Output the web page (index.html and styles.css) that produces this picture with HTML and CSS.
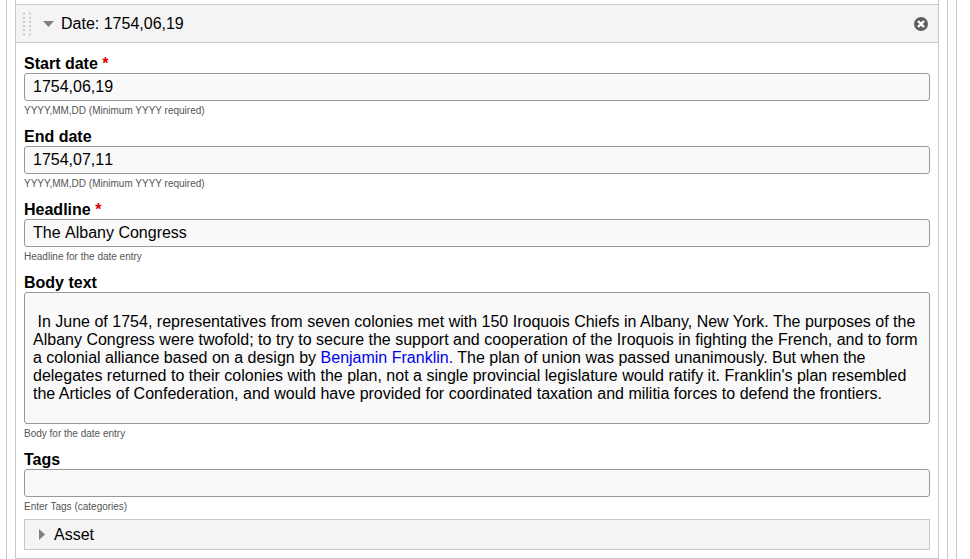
FILE: index.html
```
<!DOCTYPE html>
<html lang="en">
<head>
    <meta charset="UTF-8">
    <title>Timeline editor</title>
    <link rel="stylesheet" href="styles.css">
</head>
<body>
    <div class="form">
        <div class="list">
            <section class="item">
                <header class="item-header">
                    <svg class="grip" width="8" height="24" viewBox="0 0 8 24">
                        <path d="M1 0.5v23M7 0.5v23" stroke="#ccc" stroke-width="2" stroke-dasharray="2 2.2"/>
                    </svg>
                    <svg class="arrow-down" width="11" height="6" viewBox="0 0 11 6">
                        <path d="M0 0h11L5.5 6z" fill="#808080"/>
                    </svg>
                    <span class="item-title">Date: 1754,06,19</span>
                    <svg class="remove" width="14" height="14" viewBox="0 0 14 14">
                        <circle cx="7" cy="7" r="7" fill="#5f5f5f"/>
                        <path d="M4 4l6 6M10 4l-6 6" stroke="#fff" stroke-width="2.4"/>
                    </svg>
                </header>

                <div class="item-body">
                    <div class="field">
                        <label for="start">Start date <span class="required">*</span></label>
                        <input id="start" type="text" value="1754,06,19">
                        <p class="description">YYYY,MM,DD (Minimum YYYY required)</p>
                    </div>
                    <div class="field">
                        <label for="end">End date</label>
                        <input id="end" type="text" value="1754,07,11">
                        <p class="description">YYYY,MM,DD (Minimum YYYY required)</p>
                    </div>
                    <div class="field">
                        <label for="headline">Headline <span class="required">*</span></label>
                        <input id="headline" type="text" value="The Albany Congress">
                        <p class="description">Headline for the date entry</p>
                    </div>
                    <div class="field">
                        <label>Body text</label>
                        <div class="editor" contenteditable="true" spellcheck="false">&nbsp;In June of 1754, representatives from seven colonies met with 150 Iroquois Chiefs in Albany, New York. The purposes of the Albany Congress were twofold; to try to secure the support and cooperation of the Iroquois in fighting the French, and to form a colonial alliance based on a design by <a href="#">Benjamin Franklin.</a> The plan of union was passed unanimously. But when the delegates returned to their colonies with the plan, not a single provincial legislature would ratify it. Franklin's plan resembled the Articles of Confederation, and would have provided for coordinated taxation and militia forces to defend the frontiers.</div>
                        <p class="description">Body for the date entry</p>
                    </div>
                    <div class="field">
                        <label for="tags">Tags</label>
                        <input id="tags" type="text" value="">
                        <p class="description">Enter Tags (categories)</p>
                    </div>
                    <div class="asset">
                        <svg width="6" height="11" viewBox="0 0 6 11">
                            <path d="M0 0v11l6-5.5z" fill="#808080"/>
                        </svg>
                        <span>Asset</span>
                    </div>
                </div>
            </section>
        </div>
    </div>
</body>
</html>
```
FILE: styles.css
```
* {
    box-sizing: border-box;
}

body {
    margin: 0;
    height: 559px;
    overflow: hidden;
    background-color: #fff;
    color: #000;
    font-family: "Liberation Sans", Arial, sans-serif;
    font-size: 16px;
    line-height: 18px;
}

.form {
    width: 957px;
    height: 559px;
    padding: 0 8px 0 6px;
    border-right: 1px solid #c8c8c8;
}

.list {
    height: 559px;
    padding: 0 8px;
    border: solid #c8c8c8;
    border-width: 0 1px;
}

.item {
    height: 559px;
    padding-top: 4px;
    border: 1px solid #c8c8c8;
    border-top: 0;
}

.item-header {
    display: flex;
    align-items: center;
    height: 39px;
    padding: 0 10px 0 7px;
    background-color: #f4f4f4;
    border: solid #c8c8c8;
    border-width: 1px 0;
}

.arrow-down {
    margin-left: 12px;
}

.item-title {
    margin-left: 7px;
}

.remove {
    margin-left: auto;
}

.item-body {
    padding: 11px 8px 0;
}

.field {
    margin-bottom: 8px;
}

label {
    display: block;
    height: 19px;
    line-height: 19px;
    font-weight: bold;
}

.required {
    color: #e00000;
}

input,
.editor {
    display: block;
    width: 100%;
    padding: 0 8px;
    background-color: #f9f9f9;
    border: 1px solid #999;
    border-radius: 3px;
    color: #000;
    font: inherit;
}

input {
    height: 28px;
    font-kerning: none;
}

.editor {
    height: 132px;
    padding-top: 20px;
    word-spacing: 0.03px;
}

.editor a {
    color: #0000ee;
    text-decoration: none;
}

.description {
    height: 18px;
    margin: 0;
    padding-top: 1px;
    color: #555;
    font-size: 10px;
    line-height: 18px;
}

.asset {
    display: flex;
    align-items: center;
    height: 31px;
    margin-top: -4px;
    padding-left: 14px;
    background-color: #f4f4f4;
    border: 1px solid #c8c8c8;
}

.asset span {
    margin-left: 9px;
}
```
